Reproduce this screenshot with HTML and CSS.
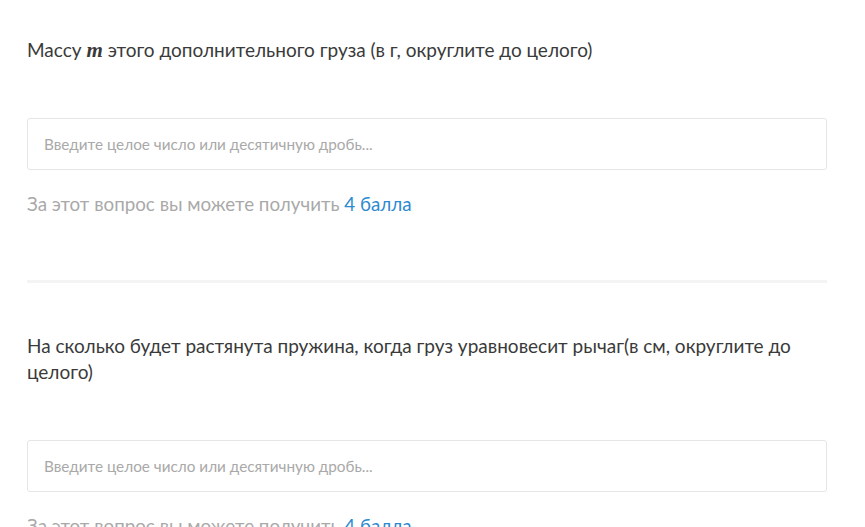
FILE: index.html
```html
<!DOCTYPE html>
<html lang="ru">
<head>
<meta charset="utf-8">
<link rel="stylesheet" href="styles.css">
</head>
<body>
<div class="page">
  <section class="question">
    <p class="q-text">Массу <span class="math">m</span> этого дополнительного груза (в г, округлите до целого)</p>
    <div class="answer"><input class="field" type="text" placeholder="Введите целое число или десятичную дробь..."></div>
    <p class="points">За этот вопрос вы можете получить <a class="pts-link" href="#">4 балла</a></p>
  </section>
  <hr class="divider">
  <section class="question">
    <p class="q-text">На сколько будет растянута пружина, когда груз уравновесит рычаг(в см, округлите до целого)</p>
    <div class="answer"><input class="field" type="text" placeholder="Введите целое число или десятичную дробь..."></div>
    <p class="points">За этот вопрос вы можете получить <a class="pts-link" href="#">4 балла</a></p>
  </section>
</div>
</body>
</html>
```
FILE: styles.css
```css
html, body { margin: 0; padding: 0; background: #fff; }
body { font-family: Lato, "Noto Sans", sans-serif; color: #333; }
.page { width: 800px; margin-left: 27px; padding-top: 37px; }
.question { display: flex; flex-direction: column; }
.q-text { margin: 0; font-size: 19px; line-height: 26px; color: #3a3a3a; }
.math { font-family: "Liberation Serif", serif; font-style: italic; font-weight: bold; font-size: 21px; }
.answer { margin-top: 55px; }
.field { box-sizing: border-box; width: 100%; height: 52px; border: 1px solid #e5e5e5; border-radius: 3px; padding: 0 16px; font-family: Lato, "Noto Sans", sans-serif; font-size: 15.3px; color: #333; outline: none; }
.field::placeholder { color: #a9a9a9; }
.points { margin: 21px 0 0; font-size: 18.8px; line-height: 26px; color: #a9a9a9; }
.pts-link { color: #2b8ad0; text-decoration: none; }
.divider { margin: 63px 0 50px; border: 0; height: 3px; background: #f4f4f4; }
```
